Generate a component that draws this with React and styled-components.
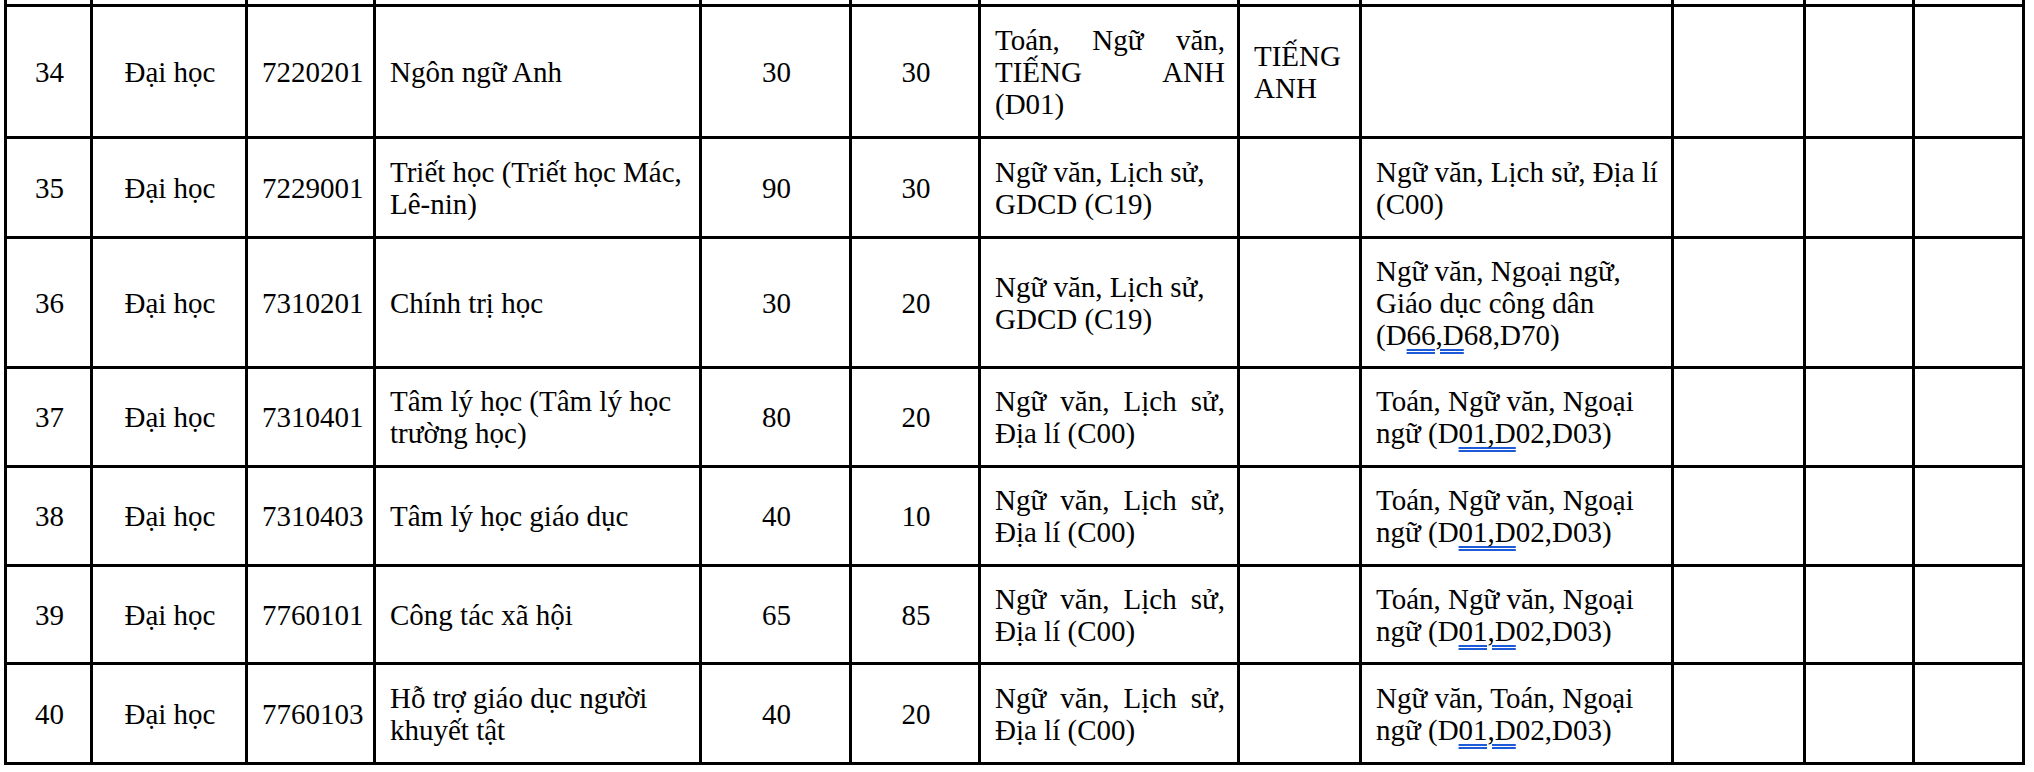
import styled, { createGlobalStyle } from 'styled-components';

const COLUMNS = '86px 155px 128px 326px 150px 129px 259px 122px 312px 132px 109px 110px';

const rows = [
  {
    height: 132,
    no: '34', level: 'Đại học', code: '7220201', name: 'Ngôn ngữ Anh',
    a: '30', b: '30',
    combo: 'Toán, Ngữ văn, TIẾNG ANH (D01)', justify: true,
    main: 'TIẾNG ANH', other: null,
  },
  {
    height: 100,
    no: '35', level: 'Đại học', code: '7229001', name: 'Triết học (Triết học Mác, Lê-nin)',
    a: '90', b: '30',
    combo: 'Ngữ văn, Lịch sử, GDCD (C19)', justify: false,
    main: '', other: ['Ngữ văn, Lịch sử, Địa lí (C00)'],
  },
  {
    height: 130,
    no: '36', level: 'Đại học', code: '7310201', name: 'Chính trị học',
    a: '30', b: '20',
    combo: 'Ngữ văn, Lịch sử, GDCD (C19)', justify: false,
    main: '', other: ['Ngữ văn, Ngoại ngữ, Giáo dục công dân (D', '66,D', '68,D70)'],
  },
  {
    height: 99,
    no: '37', level: 'Đại học', code: '7310401', name: 'Tâm lý học (Tâm lý học trường học)',
    a: '80', b: '20',
    combo: 'Ngữ văn, Lịch sử, Địa lí (C00)', justify: true,
    main: '', other: ['Toán, Ngữ văn, Ngoại ngữ (D', '01,D', '02,D03)'],
  },
  {
    height: 99,
    no: '38', level: 'Đại học', code: '7310403', name: 'Tâm lý học giáo dục',
    a: '40', b: '10',
    combo: 'Ngữ văn, Lịch sử, Địa lí (C00)', justify: true,
    main: '', other: ['Toán, Ngữ văn, Ngoại ngữ (D', '01,D', '02,D03)'],
  },
  {
    height: 98,
    no: '39', level: 'Đại học', code: '7760101', name: 'Công tác xã hội',
    a: '65', b: '85',
    combo: 'Ngữ văn, Lịch sử, Địa lí (C00)', justify: true,
    main: '', other: ['Toán, Ngữ văn, Ngoại ngữ (D', '01,D', '02,D03)'],
  },
  {
    height: 100,
    no: '40', level: 'Đại học', code: '7760103', name: 'Hỗ trợ giáo dục người khuyết tật',
    a: '40', b: '20',
    combo: 'Ngữ văn, Lịch sử, Địa lí (C00)', justify: true,
    main: '', other: ['Ngữ văn, Toán, Ngoại ngữ (D', '01,D', '02,D03)'],
  },
];

const App = () => {
  return (
    <>
      <GlobalStyle />
      <Sheet>
        <Row $height={7}>
          {Array.from({ length: 12 }).map((_, i) => <Cell key={i} />)}
        </Row>
        {rows.map((r) => (
          <Row key={r.no} $height={r.height}>
            <Cell $align="center"><Text>{r.no}</Text></Cell>
            <Cell $align="center"><Text>{r.level}</Text></Cell>
            <Cell $align="center"><Text>{r.code}</Text></Cell>
            <Cell><Text>{r.name}</Text></Cell>
            <Cell $align="center"><Text>{r.a}</Text></Cell>
            <Cell $align="center"><Text>{r.b}</Text></Cell>
            <Cell $align={r.justify ? 'justify' : 'left'}><Text>{r.combo}</Text></Cell>
            <Cell><Text>{r.main}</Text></Cell>
            <Cell>
              {r.other && (
                <Text>
                  {r.other[0]}
                  {r.other[1] && <GrammarMark>{r.other[1]}</GrammarMark>}
                  {r.other[2]}
                </Text>
              )}
            </Cell>
            <Cell />
            <Cell />
            <Cell />
          </Row>
        ))}
      </Sheet>
    </>
  );
};

const GlobalStyle = createGlobalStyle`
  html, body {
    margin: 0;
    padding: 0;
    background: #fff;
  }
  body {
    font-family: "Liberation Serif", "Times New Roman", serif;
    color: #000;
  }
`;

const Sheet = styled.div`
  display: flex;
  flex-direction: column;
  width: fit-content;
  margin-left: 4px;
  border-left: 3px solid #000;
`;

const Row = styled.div`
  display: grid;
  grid-template-columns: ${COLUMNS};
  height: ${({ $height }) => $height}px;
`;

const Cell = styled.div`
  box-sizing: border-box;
  display: flex;
  flex-direction: column;
  justify-content: center;
  padding: 0 12px 0 14px;
  border-right: 3px solid #000;
  border-bottom: 3px solid #000;
  font-size: 29px;
  line-height: 32px;
  text-align: ${({ $align }) => $align || 'left'};
  text-align-last: ${({ $align }) => ($align === 'center' ? 'center' : 'left')};
  overflow: hidden;
`;

const Text = styled.div`
  width: 100%;
`;

const GrammarMark = styled.span`
  text-decoration-line: underline;
  text-decoration-style: double;
  text-decoration-color: #1d5ad8;
  text-decoration-thickness: 2px;
  text-underline-offset: 4px;
`;

export default App;
